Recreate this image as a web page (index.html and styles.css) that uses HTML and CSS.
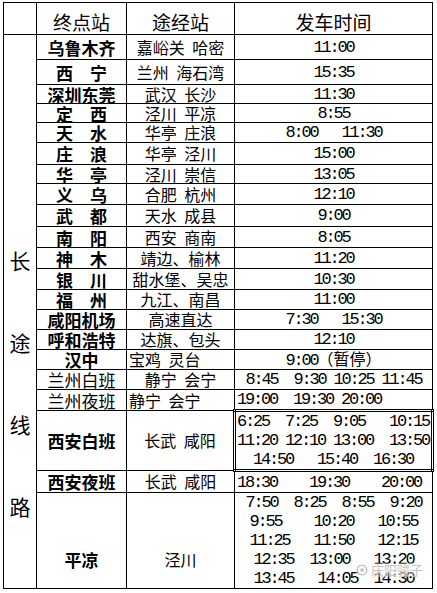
FILE: index.html
```html
<!DOCTYPE html>
<html lang="zh-CN">
<head>
<meta charset="utf-8">
<title>长途线路</title>
<link rel="stylesheet" href="styles.css">
</head>
<body>
<div class="sheet">
<table class="schedule">
  <colgroup><col class="c-side"><col class="c-dest"><col class="c-via"><col class="c-time"></colgroup>
  <thead>
    <tr class="h32"><th></th><th>终点站</th><th>途经站</th><th>发车时间</th></tr>
  </thead>
  <tbody>
    <tr class="h25">
      <td class="side" rowspan="21"><div class="side-text"><span>长</span><span>途</span><span>线</span><span>路</span></div></td>
      <td class="dest">乌鲁木齐</td><td class="via">嘉峪关 哈密</td><td class="time">11:00</td>
    </tr>
    <tr class="h25"><td class="dest">西　宁</td><td class="via">兰州 海石湾</td><td class="time">15:35</td></tr>
    <tr class="h19"><td class="dest">深圳东莞</td><td class="via">武汉 长沙</td><td class="time">11:30</td></tr>
    <tr class="h19"><td class="dest">定　西</td><td class="via">泾川 平凉</td><td class="time">8:55</td></tr>
    <tr class="h20"><td class="dest">天　水</td><td class="via">华亭 庄浪</td><td class="time">8:00   11:30</td></tr>
    <tr class="h22"><td class="dest">庄　浪</td><td class="via">华亭 泾川</td><td class="time">15:00</td></tr>
    <tr class="h19"><td class="dest">华　亭</td><td class="via">泾川 崇信</td><td class="time">13:05</td></tr>
    <tr class="h21"><td class="dest">义　乌</td><td class="via">合肥 杭州</td><td class="time">12:10</td></tr>
    <tr class="h22"><td class="dest">武　都</td><td class="via">天水 成县</td><td class="time">9:00</td></tr>
    <tr class="h21"><td class="dest">南　阳</td><td class="via">西安 商南</td><td class="time">8:05</td></tr>
    <tr class="h21"><td class="dest">神　木</td><td class="via">靖边、榆林</td><td class="time">11:20</td></tr>
    <tr class="h21"><td class="dest">银　川</td><td class="via">甜水堡、吴忠</td><td class="time">10:30</td></tr>
    <tr class="h20"><td class="dest">福　州</td><td class="via">九江、南昌</td><td class="time">11:00</td></tr>
    <tr class="h20"><td class="dest">咸阳机场</td><td class="via">高速直达</td><td class="time">7:30   15:30</td></tr>
    <tr class="h20"><td class="dest">呼和浩特</td><td class="via">达旗、包头</td><td class="time">12:10</td></tr>
    <tr class="h20"><td class="dest">汉中</td><td class="via left">宝鸡  灵台</td><td class="time">9:00<span class="cjk">（暂停）</span></td></tr>
    <tr class="h20"><td class="dest light">兰州白班</td><td class="via">静宁 会宁</td><td class="time">8:45  9:30 10:25 11:45</td></tr>
    <tr class="h21"><td class="dest light">兰州夜班</td><td class="via left">静宁 会宁</td><td class="time left">19:00  19:30 20:00</td></tr>
    <tr class="h58"><td class="dest">西安白班</td><td class="via">长武 咸阳</td>
      <td class="time boxed"><div class="line">6:25  7:25  9:05   10:15</div><div class="line">11:20 12:10 13:00  13:50</div><div class="line">  14:50   15:40  16:30</div></td>
    </tr>
    <tr class="h22"><td class="dest">西安夜班</td><td class="via">长武 咸阳</td><td class="time left">18:30    19:30    20:00</td></tr>
    <tr class="h95"><td class="dest low">平凉</td><td class="via low">泾川</td>
      <td class="time stack"><div class="line">7:50  8:25  8:55  9:20</div><div class="line">9:55    10:20   10:55</div><div class="line">11:25   11:50   12:15</div><div class="line">12:35  13:00   13:20</div><div class="line">13:45   14:05  14:30</div></td>
    </tr>
  </tbody>
</table>
<div class="watermark"><svg class="wm-icon" viewBox="0 0 12 12" width="12" height="12"><circle cx="6" cy="6" r="4.8" fill="none" stroke="#bdbdbd" stroke-width="1.3"/><circle cx="6" cy="6" r="1.8" fill="#bdbdbd"/></svg><span>庆阳骏子</span></div>
</div>
</body>
</html>
```

FILE: styles.css
```css
body {
  margin: 0;
  background: #fff;
}

.sheet {
  position: relative;
  width: 437px;
  height: 593px;
}

.schedule {
  border-collapse: collapse;
  table-layout: fixed;
  width: 430px;
  margin: 2px 0 0 3px;
  font-family: "Noto Sans CJK SC", sans-serif;
  color: #000;
}

.c-side { width: 33px; }
.c-dest { width: 90px; }
.c-via { width: 108px; }
.c-time { width: 198px; }

.schedule th,
.schedule td {
  border: 1px solid #000;
  padding: 0;
  text-align: center;
  vertical-align: middle;
  white-space: nowrap;
  line-height: 17px;
}

.schedule th {
  font-size: 19px;
  font-weight: 400;
  line-height: 19px;
  padding-top: 6px;
}

.h32 { height: 32px; }
.h25 { height: 25px; }
.h22 { height: 22px; }
.h21 { height: 21px; }
.h20 { height: 20px; }
.h19 { height: 19px; }
.h58 { height: 58px; }
.h95 { height: 95px; }

.schedule td.side {
  vertical-align: top;
  padding-top: 184px;
  font-size: 21px;
}

.side-text span {
  display: block;
  line-height: 82px;
}

.dest {
  font-size: 17px;
  font-weight: 700;
}

.dest.light {
  font-weight: 400;
}

.via {
  font-size: 16px;
  word-spacing: 4px;
  white-space: pre;
}

.schedule td.left {
  text-align: left;
  padding-left: 2px;
}

.schedule td.low {
  padding-top: 38px;
}

.time {
  font-family: "Liberation Mono", monospace;
  font-size: 17px;
  letter-spacing: -2.2px;
}

.schedule td.time {
  white-space: pre;
}

.time .cjk {
  font-family: "Noto Sans CJK SC", sans-serif;
  font-size: 16px;
  letter-spacing: 0;
}

.schedule td.boxed {
  border: 3px double #000;
  text-align: left;
  padding-left: 1px;
}

.line {
  line-height: 19px;
}

.stack {
  vertical-align: top;
}

.watermark {
  position: absolute;
  left: 356px;
  top: 561px;
  display: flex;
  align-items: center;
  gap: 3px;
  font-family: "Noto Sans CJK SC", sans-serif;
  font-size: 13px;
  line-height: 14px;
  color: #c4c4c4;
  background: rgba(255, 255, 255, 0.35);
}
```
